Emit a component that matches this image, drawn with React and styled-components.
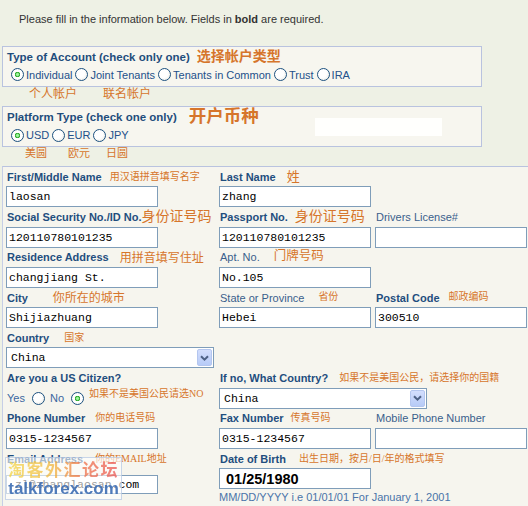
import styled, { createGlobalStyle } from 'styled-components';

const GlobalStyle = createGlobalStyle`
  body {
    margin: 0;
    background: #eef1e5;
    font-family: "Liberation Sans", Arial, sans-serif;
  }
`;

const Page = styled.div`
  position: relative;
  display: flex;
  flex-direction: column;
  width: 528px;
  height: 506px;
  overflow: hidden;
  padding-top: 12px;
  box-sizing: border-box;
`;

const Intro = styled.div`
  margin: 0 0 20px 19px;
  font-size: 11px;
  line-height: 14px;
  color: #333;
`;

const Box = styled.div`
  position: relative;
  margin-left: 2px;
  width: 480px;
  height: 41px;
  box-sizing: border-box;
  border: 1px solid #b9c3df;
  background: #f7f6ef;
`;

const BoxTitle = styled.div`
  display: flex;
  align-items: center;
  height: ${p => p.$h}px;
  padding-left: 4px;
  font-size: 11.5px;
  font-weight: bold;
  color: #1f4d7c;
  white-space: nowrap;
`;

const Blank = styled.div`
  position: absolute;
  left: 312px;
  top: 11px;
  width: 127px;
  height: 18px;
  background: #fffffd;
`;

const RadioRow = styled.div`
  display: flex;
  align-items: center;
  height: ${p => p.$h}px;
  padding-left: 8px;
`;

const Option = styled.label`
  display: flex;
  align-items: center;
  margin-right: 3px;
  font-size: 11px;
  color: #23508a;
  white-space: nowrap;
`;

const Radio = styled.span`
  flex-shrink: 0;
  width: 13px;
  height: 13px;
  margin-right: 2px;
  box-sizing: border-box;
  border-radius: 50%;
  border: 1px solid #1c5180;
  background: ${p => p.$checked
    ? 'radial-gradient(circle, #9ef59e 0 1px, #21a121 2.4px, #fff 3px, #fff 60%, #e4e4dc 100%)'
    : 'radial-gradient(circle at 40% 40%, #fff 0 45%, #e2e2da 100%)'};
`;

const NoteRow = styled.div`
  display: flex;
  height: 12px;
  margin-bottom: 7px;
`;

const Note = styled.span`
  font-family: "Liberation Serif", "Noto Sans CJK SC", serif;
  font-size: ${p => p.$size || 10}px;
  line-height: ${p => (p.$size || 10) + 2}px;
  color: #d6752b;
  margin-left: ${p => p.$gap || 0}px;
  margin-bottom: ${p => (p.$lift || 0) * 2}px;
  margin-top: ${p => (p.$drop || 0) * 2}px;
  align-self: ${p => (p.$top ? 'flex-start' : 'auto')};
  white-space: nowrap;
`;

const Panel = styled.div`
  flex: 1;
  margin-left: 2px;
  padding-left: 3px;
  border-top: 1px solid #b9c3df;
  border-left: 1px solid #c6cee6;
  background: #f6f5ee;
  display: grid;
  grid-template-columns: 213px 156px 152px;
  align-content: start;
`;

const Field = styled.div`
  display: flex;
  flex-direction: column;
  grid-column: ${p => p.$col} / span ${p => p.$span || 1};
`;

const LabelRow = styled.div`
  display: flex;
  align-items: center;
  height: 19.3px;
  padding-left: 1px;
  white-space: nowrap;
`;

const Label = styled.span`
  font-size: 11px;
  font-weight: ${p => (p.$plain ? 'normal' : 'bold')};
  color: ${p => (p.$plain ? '#3a5f8c' : '#1f4e7e')};
`;

const Input = styled.input`
  width: 152px;
  height: ${p => p.$h || 21}px;
  margin: ${p => p.$drop || 0}px 0 0;
  box-sizing: border-box;
  border: 1px solid #7f9db9;
  background: #fff;
  padding: 0 0 0 ${p => p.$pad ?? 2}px;
  font-family: ${p => (p.$big ? '"Liberation Sans", Arial, sans-serif' : '"Liberation Mono", monospace')};
  font-size: ${p => (p.$big ? 14.5 : 11.5)}px;
  font-weight: ${p => (p.$big ? 'bold' : 'normal')};
  color: #000;
  outline: none;
`;

const Combo = styled.div`
  display: flex;
  align-items: center;
  justify-content: space-between;
  width: 208px;
  height: 21px;
  box-sizing: border-box;
  border: 1px solid #7f9db9;
  background: #fff;
  padding: 0 1px 0 4px;
  font-family: "Liberation Mono", monospace;
  font-size: 11.5px;
`;

const ComboButton = styled.span`
  display: flex;
  align-items: center;
  justify-content: center;
  width: 15px;
  height: 17px;
  box-sizing: border-box;
  border: 1px solid #b4c6ef;
  border-radius: 2px;
  background: linear-gradient(#d3defd, #b7cbf7);
`;

const Choice = styled.div`
  display: flex;
  align-items: center;
  height: 21px;
  padding-left: 1px;
`;

const ChoiceText = styled.span`
  font-size: 11px;
  color: #3b67a0;
  margin-right: ${p => p.$mr}px;
`;

const Hint = styled.div`
  font-size: 11px;
  line-height: 16px;
  color: #4a74a9;
  white-space: nowrap;
`;

const Watermark = styled.div`
  position: absolute;
  left: 5px;
  top: 457px;
  width: 117px;
  height: 43px;
  box-sizing: border-box;
  border: 1px solid rgba(150, 175, 215, 0.5);
  background: rgba(255, 255, 255, 0.6);
  display: flex;
  flex-direction: column;
  align-items: center;
  overflow: hidden;
`;

const WatermarkCn = styled.div`
  font-family: "Noto Sans CJK SC", sans-serif;
  font-weight: 700;
  font-size: 17px;
  line-height: 22px;
  letter-spacing: 1.5px;
  background: linear-gradient(90deg, #f3d43b, #f1b232 40%, #ee6b3b 65%, #ea4a4a);
  -webkit-background-clip: text;
  background-clip: text;
  color: transparent;
  opacity: 0.7;
`;

const WatermarkEn = styled.div`
  font-weight: bold;
  font-size: 17px;
  line-height: 18px;
  color: #3d6db3;
  opacity: 0.9;
`;

function Chevron() {
  return (
    <svg width="9" height="6" viewBox="0 0 9 6">
      <path d="M1 1.2 L4.5 4.6 L8 1.2" fill="none" stroke="#4d6185" strokeWidth="2" />
    </svg>
  );
}

function Select({ value }) {
  return (
    <Combo>
      <span>{value}</span>
      <ComboButton><Chevron /></ComboButton>
    </Combo>
  );
}

function App() {
  return (
    <Page>
      <GlobalStyle />
      <Intro>
        Please fill in the information below. Fields in <b>bold</b> are required.
      </Intro>

      <Box>
        <BoxTitle $h={19}>
          Type of Account (check only one)
          <Note $size={14} $gap={7}>选择帐户类型</Note>
        </BoxTitle>
        <RadioRow $h={17}>
          <Option><Radio $checked />Individual</Option>
          <Option><Radio />Joint Tenants</Option>
          <Option><Radio />Tenants in Common</Option>
          <Option><Radio />Trust</Option>
          <Option><Radio />IRA</Option>
        </RadioRow>
      </Box>
      <NoteRow>
        <Note $size={12} $gap={29}>个人帐户</Note>
        <Note $size={12} $gap={26}>联名帐户</Note>
      </NoteRow>

      <Box>
        <BoxTitle $h={20}>
          Platform Type (check one only)
          <Note $size={17.5} $gap={12}>开户币种</Note>
        </BoxTitle>
        <Blank />
        <RadioRow $h={16}>
          <Option><Radio $checked />USD</Option>
          <Option><Radio />EUR</Option>
          <Option><Radio />JPY</Option>
        </RadioRow>
      </Box>
      <NoteRow>
        <Note $size={11} $gap={25}>美圆</Note>
        <Note $size={11} $gap={21}>欧元</Note>
        <Note $size={11} $gap={16}>日圆</Note>
      </NoteRow>

      <Panel>
        <Field $col={1}>
          <LabelRow><Label>First/Middle Name</Label><Note $gap={8}>用汉语拼音填写名字</Note></LabelRow>
          <Input readOnly value="laosan" />
        </Field>
        <Field $col={2}>
          <LabelRow><Label>Last Name</Label><Note $size={13} $gap={11}>姓</Note></LabelRow>
          <Input readOnly value="zhang" />
        </Field>

        <Field $col={1}>
          <LabelRow><Label>Social Security No./ID No.</Label><Note $size={14}>身份证号码</Note></LabelRow>
          <Input readOnly value="120110780101235" />
        </Field>
        <Field $col={2}>
          <LabelRow><Label>Passport No.</Label><Note $size={14} $gap={7}>身份证号码</Note></LabelRow>
          <Input readOnly value="120110780101235" />
        </Field>
        <Field $col={3}>
          <LabelRow><Label $plain>Drivers License#</Label></LabelRow>
          <Input readOnly value="" />
        </Field>

        <Field $col={1}>
          <LabelRow><Label>Residence Address</Label><Note $size={12} $gap={11} $drop={1}>用拼音填写住址</Note></LabelRow>
          <Input readOnly value="changjiang St." />
        </Field>
        <Field $col={2}>
          <LabelRow><Label $plain>Apt. No.</Label><Note $size={12.5} $gap={14} $lift={1}>门牌号码</Note></LabelRow>
          <Input readOnly value="No.105" />
        </Field>

        <Field $col={1}>
          <LabelRow><Label>City</Label><Note $size={12} $gap={25}>你所在的城市</Note></LabelRow>
          <Input readOnly value="Shijiazhuang" />
        </Field>
        <Field $col={2}>
          <LabelRow><Label $plain>State or Province</Label><Note $gap={14} $lift={1}>省份</Note></LabelRow>
          <Input readOnly value="Hebei" />
        </Field>
        <Field $col={3}>
          <LabelRow><Label>Postal Code</Label><Note $gap={9} $lift={1}>邮政编码</Note></LabelRow>
          <Input readOnly value="300510" />
        </Field>

        <Field $col={1}>
          <LabelRow><Label>Country</Label><Note $gap={15}>国家</Note></LabelRow>
          <Select value="China" />
        </Field>

        <Field $col={1}>
          <LabelRow><Label>Are you a US Citizen?</Label></LabelRow>
          <Choice>
            <ChoiceText $mr={7}>Yes</ChoiceText>
            <Radio />
            <ChoiceText $mr={7}>&nbsp;No</ChoiceText>
            <Radio $checked />
            <Note $gap={3} $top>如果不是美国公民请选NO</Note>
          </Choice>
        </Field>
        <Field $col={2} $span={2}>
          <LabelRow><Label>If no, What Country?</Label><Note $gap={11}>如果不是美国公民，请选择你的国籍</Note></LabelRow>
          <Select value="China" />
        </Field>

        <Field $col={1}>
          <LabelRow><Label>Phone Number</Label><Note $gap={10}>你的电话号码</Note></LabelRow>
          <Input readOnly value="0315-1234567" />
        </Field>
        <Field $col={2}>
          <LabelRow><Label>Fax Number</Label><Note $gap={7}>传真号码</Note></LabelRow>
          <Input readOnly value="0315-1234567" />
        </Field>
        <Field $col={3}>
          <LabelRow><Label $plain>Mobile Phone Number</Label></LabelRow>
          <Input readOnly value="" />
        </Field>

        <Field $col={1}>
          <LabelRow><Label>Email Address</Label><Note $gap={12}>你的EMAIL地址</Note></LabelRow>
          <Input readOnly value="zl@zhanglaosan.com" $pad={8} $drop={7} $h={19} />
        </Field>
        <Field $col={2}>
          <LabelRow><Label>Date of Birth</Label><Note $gap={13}>出生日期，按月/日/年的格式填写</Note></LabelRow>
          <Input readOnly value="01/25/1980" $big $pad={6} />
          <Hint>MM/DD/YYYY i.e 01/01/01 For January 1, 2001</Hint>
        </Field>
      </Panel>

      <Watermark>
        <WatermarkCn>淘客外汇论坛</WatermarkCn>
        <WatermarkEn>talkforex.com</WatermarkEn>
      </Watermark>
    </Page>
  );
}

export default App;
